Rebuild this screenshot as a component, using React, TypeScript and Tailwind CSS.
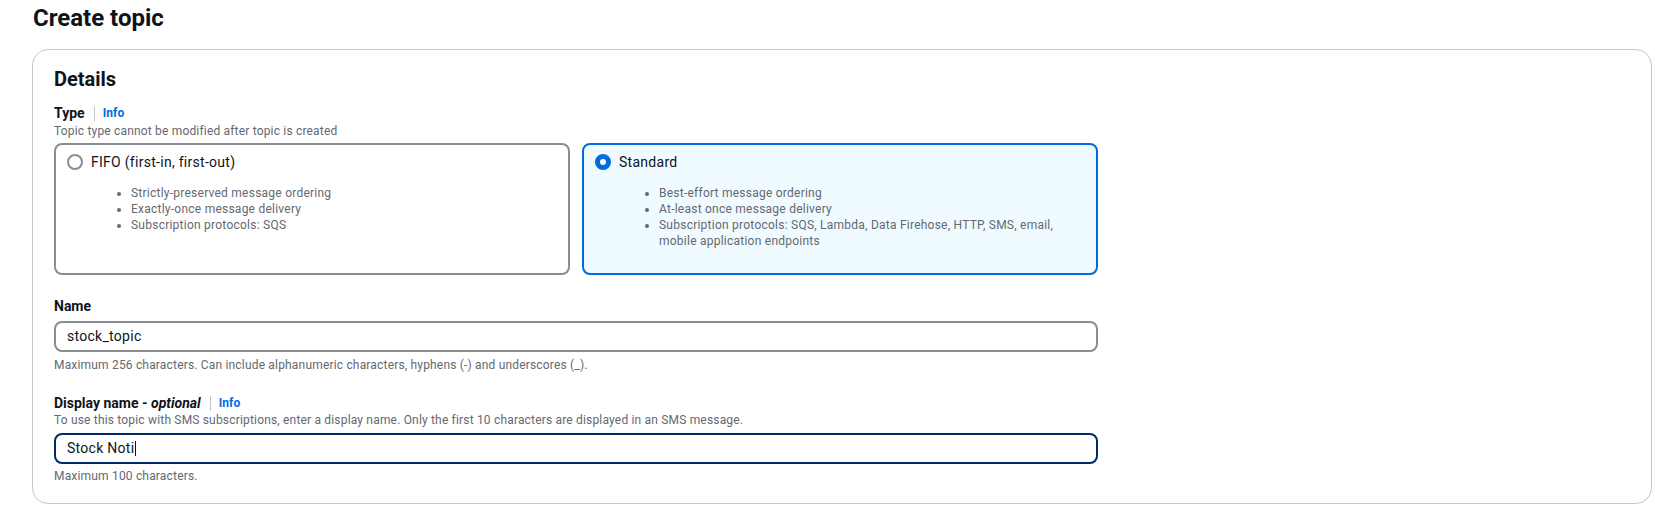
import React from 'react';

const FONT = { fontFamily: 'Roboto, "Liberation Sans", Arial, sans-serif' };

type TileProps = {
  label: string;
  points: string[];
  selected?: boolean;
};

const Radio = ({ checked }: { checked?: boolean }) =>
  checked ? (
    <span className="block w-[16px] h-[16px] shrink-0 rounded-full border-[5px] border-[#006ce0] bg-white" />
  ) : (
    <span className="block w-[16px] h-[16px] shrink-0 rounded-full border-2 border-[#8c8c94] bg-white" />
  );

const Tile = ({ label, points, selected }: TileProps) => (
  <div
    className={
      selected
        ? 'rounded-[8px] border-2 border-[#006ce0] bg-[#f0fbff] pt-[7px] pb-[12px] pl-[11px] pr-[11px]'
        : 'rounded-[8px] border-2 border-[#8c8c94] bg-white pt-[7px] pb-[12px] pl-[11px] pr-[11px]'
    }
  >
    <div className="flex items-center gap-[8px] h-[20px]">
      <Radio checked={selected} />
      <span className="text-[14px] leading-[20px] text-[#0f141a] tracking-[0.02em]">{label}</span>
    </div>
    <ul className="list-disc pl-[40px] ml-[24px] mt-[13px] mb-[12px] text-[12px] leading-[16px] text-[#656871] tracking-[0.02em]">
      {points.map(p => (
        <li key={p}>{p}</li>
      ))}
    </ul>
  </div>
);

const Label = ({ children, info }: { children: React.ReactNode; info?: boolean }) => (
  <div className="flex items-center h-[18px] text-[14px] leading-[18px] font-bold text-[#0f141a]">
    <span>{children}</span>
    {info && (
      <>
        <span className="ml-[9px] mr-[8px] w-px h-[15px] bg-[#c6c6cd]" />
        <a className="text-[12px] font-bold text-[#006ce0] tracking-[0.01em]">Info</a>
      </>
    )}
  </div>
);

const Hint = ({ children, className }: { children: React.ReactNode; className?: string }) => (
  <div className={'text-[12px] leading-[16px] text-[#656871] tracking-[0.015em] ' + (className ?? '')}>{children}</div>
);

const App: React.FC = () => {
  return (
    <div className="min-h-screen bg-white pt-[3px]" style={FONT}>
      <h1 className="ml-[33px] text-[24px] leading-[30px] font-bold text-[#0f141a]">Create topic</h1>

      <div className="mt-[16px] ml-[32px] mr-[3px] rounded-[16px] border border-[#c6c6cd] bg-white pt-[17px] pb-[19px] px-[21px]">
        <h2 className="text-[20px] leading-[24px] font-bold text-[#0f141a]">Details</h2>

        <div className="w-[1044px]">
          <div className="mt-[13px]">
            <Label info>Type</Label>
            <Hint className="mt-px">Topic type cannot be modified after topic is created</Hint>
            <div className="mt-[4px] grid grid-cols-2 gap-[12px]">
              <Tile
                label="FIFO (first-in, first-out)"
                points={[
                  'Strictly-preserved message ordering',
                  'Exactly-once message delivery',
                  'Subscription protocols: SQS',
                ]}
              />
              <Tile
                selected
                label="Standard"
                points={[
                  'Best-effort message ordering',
                  'At-least once message delivery',
                  'Subscription protocols: SQS, Lambda, Data Firehose, HTTP, SMS, email, mobile application endpoints',
                ]}
              />
            </div>
          </div>

          <div className="mt-[22px]">
            <Label>Name</Label>
            <div className="mt-[6px] flex items-center h-[31px] rounded-[8px] border-2 border-[#8c8c94] bg-white px-[11px] text-[14px] text-[#0f141a] tracking-[0.02em]">
              stock_topic
            </div>
            <Hint className="mt-[5px]">
              Maximum 256 characters. Can include alphanumeric characters, hyphens (-) and underscores (_).
            </Hint>
          </div>

          <div className="mt-[21px]">
            <Label info>
              Display name - <i>optional</i>
            </Label>
            <Hint>
              To use this topic with SMS subscriptions, enter a display name. Only the first 10 characters are displayed in an SMS message.
            </Hint>
            <div className="mt-[5px] flex items-center h-[31px] rounded-[8px] border-2 border-[#002b66] bg-white px-[11px] text-[14px] text-[#0f141a] tracking-[0.02em]">
              <span>Stock Noti</span>
              <span className="ml-px w-px h-[15px] bg-[#0f141a]" />
            </div>
            <Hint className="mt-[4px]">Maximum 100 characters.</Hint>
          </div>
        </div>
      </div>
    </div>
  );
};

export default App;
